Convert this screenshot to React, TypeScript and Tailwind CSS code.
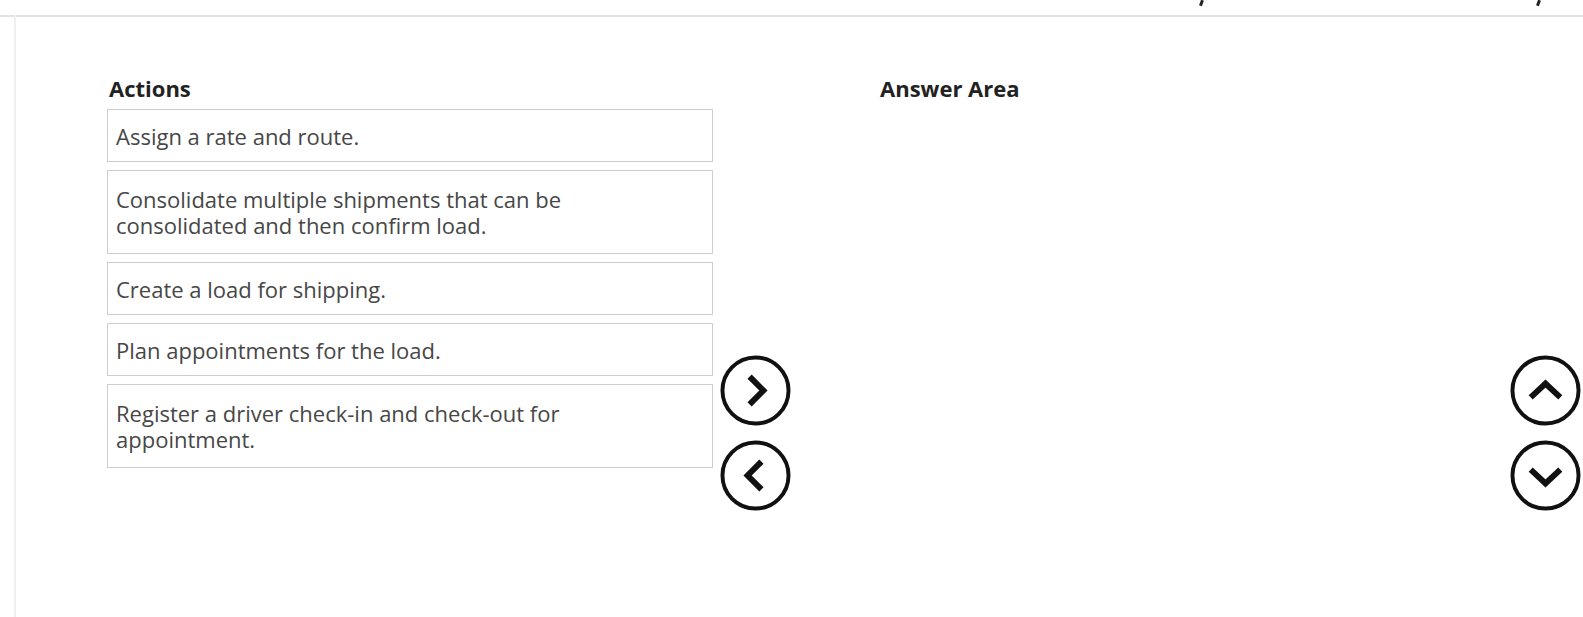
const actions: { text: string; tall?: boolean }[] = [
  { text: 'Assign a rate and route.' },
  { text: 'Consolidate multiple shipments that can be consolidated and then confirm load.', tall: true },
  { text: 'Create a load for shipping.' },
  { text: 'Plan appointments for the load.' },
  { text: 'Register a driver check-in and check-out for appointment.', tall: true },
]

type Dir = 'left' | 'right' | 'up' | 'down'

const chevrons: Record<Dir, string> = {
  right: 'M30 22 L44 36 L30 50',
  left: 'M42 22 L28 36 L42 50',
  up: 'M21 43 L36 29 L51 43',
  down: 'M21 30 L36 44 L51 30',
}

function RoundButton({ dir }: { dir: Dir }) {
  return (
    <button type="button" className="block w-[71px] h-[71px] shrink-0">
      <svg viewBox="0 0 72 72" width="71" height="71">
        <circle cx="36" cy="36" r="33.5" fill="white" stroke="#111" strokeWidth="4" />
        <path d={chevrons[dir]} fill="none" stroke="#111" strokeWidth="6" strokeLinejoin="miter" />
      </svg>
    </button>
  )
}

export default function App() {
  return (
    <div
      className="relative w-[1583px] h-[617px] overflow-hidden bg-white"
      style={{ fontFamily: '"Open Sans", "Noto Sans", sans-serif' }}
    >
      {/* frame lines */}
      <div className="absolute left-0 right-0 top-[15px] h-[2px] bg-[#e2e2e2]" />
      <div className="absolute left-[14px] top-[15px] bottom-0 w-[2px] bg-[#efefef]" />
      <div className="absolute left-[1200px] top-0 w-[3px] h-[6px] bg-[#222] rotate-[20deg]" />
      <div className="absolute left-[1537px] top-0 w-[3px] h-[6px] bg-[#222] rotate-[20deg]" />

      <div className="flex pt-[74px] pl-[107px]">
        {/* Actions */}
        <div className="w-[606px] shrink-0">
          <h2 className="text-[22px] leading-[28px] font-bold text-[#222] pl-[2px]">Actions</h2>
          <div className="mt-[7px] flex flex-col gap-[8px]">
            {actions.map((a) => (
              <div
                key={a.text}
                className={`flex items-center border border-[#cdcdcd] pl-[8px] pr-[130px] text-[22px] leading-[26px] text-[#474747] ${a.tall ? 'h-[84px]' : 'h-[53px]'}`}
              >
                {a.text}
              </div>
            ))}
          </div>
        </div>

        {/* move buttons */}
        <div className="w-[167px] shrink-0 flex flex-col pl-[7px] pt-[281px] gap-[14px]">
          <RoundButton dir="right" />
          <RoundButton dir="left" />
        </div>

        {/* Answer Area */}
        <div className="flex-1">
          <h2 className="text-[22px] leading-[28px] font-bold text-[#222]">Answer Area</h2>
        </div>

        {/* reorder buttons */}
        <div className="w-[73px] shrink-0 flex flex-col pt-[281px] gap-[14px]">
          <RoundButton dir="up" />
          <RoundButton dir="down" />
        </div>
      </div>
    </div>
  )
}
